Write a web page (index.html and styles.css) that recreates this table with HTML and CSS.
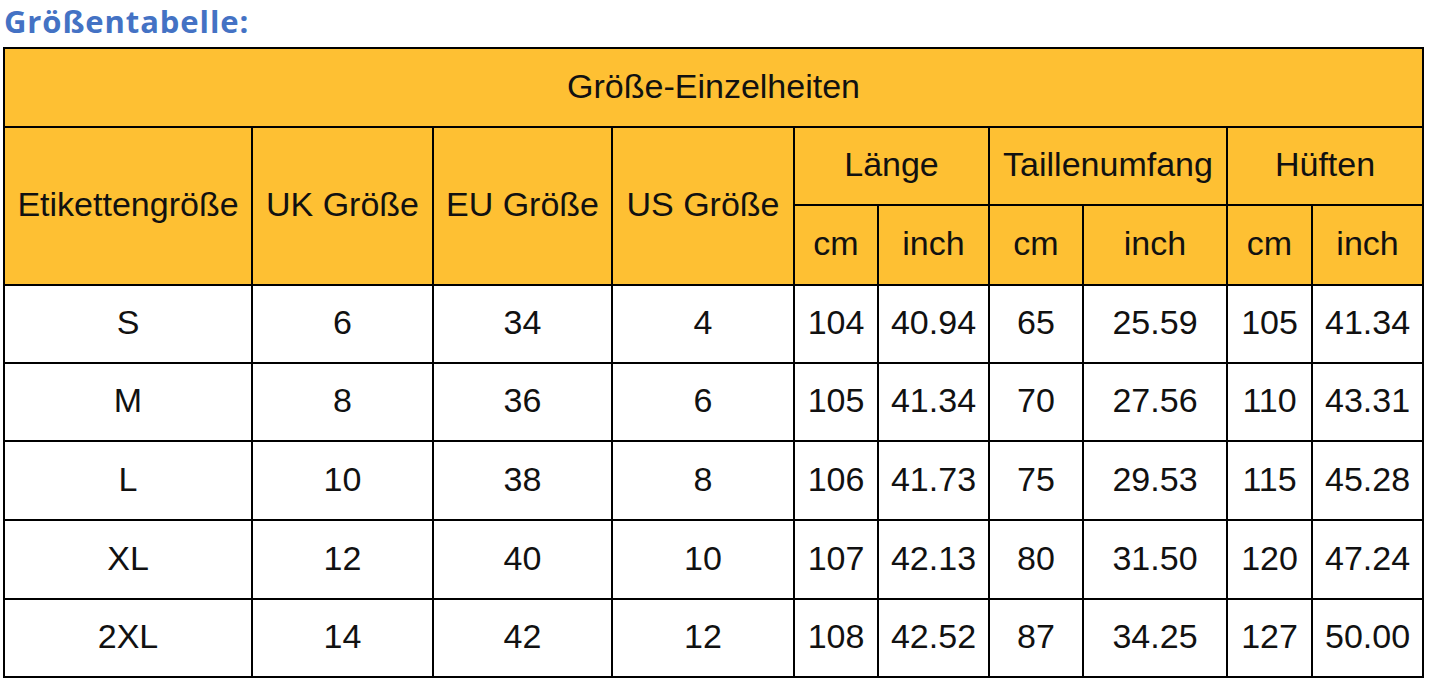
FILE: index.html
```html
<!DOCTYPE html>
<html lang="de">
<head>
<meta charset="utf-8">
<title>Größentabelle</title>
<link rel="stylesheet" href="styles.css">
</head>
<body>
<h1 class="title">Größentabelle:</h1>
<table class="size-table">
  <colgroup>
    <col class="c1"><col class="c2"><col class="c3"><col class="c4">
    <col class="c5"><col class="c6"><col class="c7"><col class="c8">
    <col class="c9"><col class="c10">
  </colgroup>
  <thead>
    <tr class="r-top"><th colspan="10">Größe-Einzelheiten</th></tr>
    <tr class="r-mid">
      <th rowspan="2">Etikettengröße</th>
      <th rowspan="2">UK Größe</th>
      <th rowspan="2">EU Größe</th>
      <th rowspan="2">US Größe</th>
      <th colspan="2">Länge</th>
      <th colspan="2">Taillenumfang</th>
      <th colspan="2">Hüften</th>
    </tr>
    <tr class="r-sub">
      <th>cm</th><th>inch</th><th>cm</th><th>inch</th><th>cm</th><th>inch</th>
    </tr>
  </thead>
  <tbody>
    <tr class="r-a"><td>S</td><td>6</td><td>34</td><td>4</td><td>104</td><td>40.94</td><td>65</td><td>25.59</td><td>105</td><td>41.34</td></tr>
    <tr class="r-a"><td>M</td><td>8</td><td>36</td><td>6</td><td>105</td><td>41.34</td><td>70</td><td>27.56</td><td>110</td><td>43.31</td></tr>
    <tr class="r-b"><td>L</td><td>10</td><td>38</td><td>8</td><td>106</td><td>41.73</td><td>75</td><td>29.53</td><td>115</td><td>45.28</td></tr>
    <tr class="r-b"><td>XL</td><td>12</td><td>40</td><td>10</td><td>107</td><td>42.13</td><td>80</td><td>31.50</td><td>120</td><td>47.24</td></tr>
    <tr class="r-a"><td>2XL</td><td>14</td><td>42</td><td>12</td><td>108</td><td>42.52</td><td>87</td><td>34.25</td><td>127</td><td>50.00</td></tr>
  </tbody>
</table>
</body>
</html>
```
FILE: styles.css
```css
html, body {
  margin: 0;
  padding: 0;
  background: #ffffff;
}
body {
  padding: 0 0 0 3px;
}
.title {
  margin: 0;
  padding: 0 0 0 1px;
  font-family: "Open Sans", "Liberation Sans", sans-serif;
  font-weight: 700;
  font-size: 31px;
  line-height: 43px;
  letter-spacing: 0.9px;
  color: #4472c4;
  height: 47px;
}
.size-table {
  border-collapse: collapse;
  table-layout: fixed;
  width: 1421px;
  font-family: "Liberation Sans", Arial, sans-serif;
  font-size: 34px;
  color: #111;
}
.size-table th,
.size-table td {
  border: 2px solid #000;
  text-align: center;
  vertical-align: middle;
  padding: 0 0 3px 0;
  font-weight: 400;
  white-space: nowrap;
}
.size-table thead th {
  background: #fec033;
}
.size-table td {
  background: #fff;
}
.c1 { width: 248px; }
.c2 { width: 181px; }
.c3 { width: 179px; }
.c4 { width: 182px; }
.c5 { width: 84px; }
.c6 { width: 111px; }
.c7 { width: 94px; }
.c8 { width: 144px; }
.c9 { width: 85px; }
.c10 { width: 111px; }
.r-top { height: 79px; }
.r-mid { height: 78px; }
.r-sub { height: 80px; }
.r-a { height: 78px; }
.r-b { height: 79px; }
```
